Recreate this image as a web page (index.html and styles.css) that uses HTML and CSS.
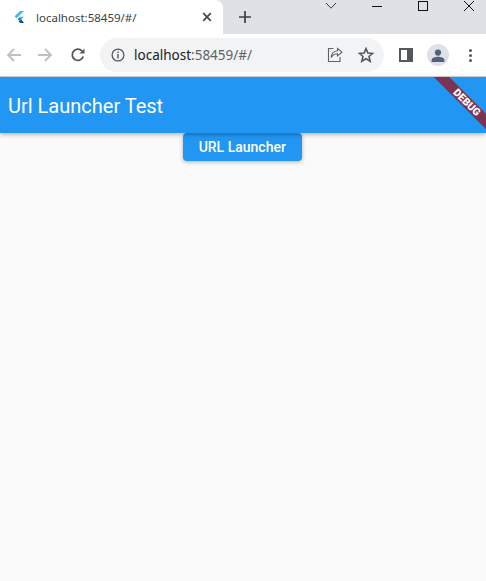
FILE: index.html
```html
<!DOCTYPE html>
<html lang="en">
<head>
    <meta charset="UTF-8">
    <title>Url Launcher Test</title>
    <link rel="stylesheet" href="styles.css">
</head>
<body>
    <div class="tabstrip">
        <div class="tab">
            <svg class="tab-logo" width="12" height="14" viewBox="0 0 12 14">
                <path d="M7.2 0.9H11L3.6 8.2 1.6 6.3z" fill="#3fb9f2"/>
                <path d="M7.2 6.8H11L7 10.9 4.8 9.2z" fill="#3fb9f2"/>
                <path d="M4.8 9.2 6.6 7.6 8.2 9.6 6.8 11z" fill="#1a7fc8"/>
                <path d="M6.8 11 8.2 9.6 11 13.1H7.4L5.4 11.3z" fill="#0a4d85"/>
            </svg>
            <span class="tab-title">localhost:58459/#/</span>
            <svg class="tab-close" width="10" height="10" viewBox="0 0 10 10">
                <path d="M1.2 1.2 8.8 8.8M8.8 1.2 1.2 8.8" stroke="#44474a" stroke-width="1.7"/>
            </svg>
        </div>
        <svg class="new-tab" width="14" height="14" viewBox="0 0 14 14">
            <path d="M7 1V13M1 7H13" stroke="#3c4043" stroke-width="1.7"/>
        </svg>
        <div class="window-controls">
            <svg width="12" height="8" viewBox="0 0 12 8"><path d="M1 1 6 6.2 11 1" fill="none" stroke="#3c4043" stroke-width="1"/></svg>
            <svg width="12" height="12" viewBox="0 0 12 12"><path d="M1 6.5H11" stroke="#111" stroke-width="1"/></svg>
            <svg width="12" height="12" viewBox="0 0 12 12"><rect x="1.5" y="1.5" width="9" height="9" fill="none" stroke="#111" stroke-width="1"/></svg>
            <svg width="12" height="12" viewBox="0 0 12 12"><path d="M1 1 11 11M11 1 1 11" stroke="#111" stroke-width="1"/></svg>
        </div>
    </div>

    <div class="toolbar">
        <svg class="nav-icon" width="16" height="16" viewBox="0 0 16 16">
            <path d="M15 8H2M8 2 2 8 8 14" fill="none" stroke="#bdc0c4" stroke-width="1.8"/>
        </svg>
        <svg class="nav-icon" width="16" height="16" viewBox="0 0 16 16">
            <path d="M1 8H14M8 2 14 8 8 14" fill="none" stroke="#bdc0c4" stroke-width="1.8"/>
        </svg>
        <svg class="nav-icon reload" width="16" height="16" viewBox="0 0 16 16">
            <path d="M13.2 9.5A5.6 5.6 0 1 1 12 4" fill="none" stroke="#54575b" stroke-width="1.8"/>
            <path d="M9.5 6.5H14.5V1.5z" fill="#54575b"/>
        </svg>
        <div class="omnibox">
            <svg width="14" height="14" viewBox="0 0 14 14">
                <circle cx="7" cy="7" r="5.9" fill="none" stroke="#54575b" stroke-width="1.3"/>
                <path d="M7 6V10.4" stroke="#54575b" stroke-width="1.4"/>
                <path d="M7 3.4V5" stroke="#54575b" stroke-width="1.4"/>
            </svg>
            <span class="url"><span class="url-host">localhost</span>:58459/#/</span>
            <svg class="share" width="16" height="16" viewBox="0 0 16 16">
                <path d="M6.5 1.5H1.5V14.5H13V10" fill="none" stroke="#5f6368" stroke-width="1.1"/>
                <path d="M10.5 1.5 15 5.2 10.5 8.9V6.7C7.8 6.7 5.6 7.7 4.3 10.4 4.4 6.7 6.9 3.9 10.5 3.7z" fill="#f1f3f4" stroke="#5f6368" stroke-width="1.1"/>
            </svg>
            <svg class="star" width="16" height="16" viewBox="0 0 16 16">
                <path d="M8 1.6 9.9 6 14.7 6.4 11 9.5 12.2 14.2 8 11.7 3.8 14.2 5 9.5 1.3 6.4 6.1 6z" fill="none" stroke="#54575b" stroke-width="1.6"/>
            </svg>
        </div>
        <svg class="side-panel" width="14" height="14" viewBox="0 0 14 14">
            <rect width="14" height="14" fill="#54575b"/>
            <rect x="2" y="2" width="6" height="10" fill="#fff"/>
        </svg>
        <div class="avatar">
            <svg width="14" height="13" viewBox="0 0 14 13">
                <circle cx="7" cy="3.6" r="3.1" fill="#54607a"/>
                <path d="M0.6 13V11C0.6 8.6 4.4 7.8 7 7.8S13.4 8.6 13.4 11V13z" fill="#54607a"/>
            </svg>
        </div>
        <div class="menu-dots"><i></i><i></i><i></i></div>
    </div>

    <div class="appbar">
        <h1>Url Launcher Test</h1>
        <div class="debug-corner">
            <div class="debug-ribbon">DEBUG</div>
        </div>
    </div>

    <main class="content">
        <button class="launch-btn" type="button">URL Launcher</button>
    </main>
</body>
</html>
```

FILE: styles.css
```css
html, body {
    height: 100%;
}
body {
    margin: 0;
    display: flex;
    flex-direction: column;
    overflow: hidden;
    background-color: #fafafa;
    font-family: Roboto, sans-serif;
}

/* browser chrome */
.tabstrip {
    height: 34px;
    flex: none;
    display: flex;
    background-color: #dee1e6;
}
.tab {
    width: 223px;
    box-sizing: border-box;
    padding: 0 11px 0 13px;
    display: flex;
    align-items: center;
    background-color: #fff;
    border-radius: 0 8px 0 0;
}
.tab-logo {
    margin-right: 11px;
}
.tab-title {
    flex: 1;
    font-family: "Noto Sans", sans-serif;
    font-size: 11.5px;
    color: #3c4043;
}
.new-tab {
    align-self: center;
    margin-left: 15px;
}
.window-controls {
    margin-left: auto;
    padding: 0 11px 0 0;
    height: 12px;
    display: flex;
    gap: 34px;
    align-items: center;
}
.toolbar {
    height: 42px;
    flex: none;
    box-sizing: border-box;
    padding: 0 0 0 6px;
    display: flex;
    align-items: center;
    background-color: #fff;
}
.nav-icon {
    margin-right: 15px;
}
.reload {
    margin-left: 2px;
    margin-right: 14px;
}
.omnibox {
    width: 284px;
    height: 34px;
    box-sizing: border-box;
    padding: 0 10px 0 11px;
    display: flex;
    align-items: center;
    background-color: #f1f3f4;
    border-radius: 17px;
}
.url {
    flex: 1;
    margin-left: 9px;
    font-family: "Noto Sans", sans-serif;
    font-size: 13.5px;
    color: #5f6368;
}
.url-host {
    color: #202124;
}
.share {
    margin-right: 15px;
}
.side-panel {
    margin-left: 15px;
}
.avatar {
    width: 22px;
    height: 22px;
    margin-left: 14px;
    display: flex;
    align-items: center;
    justify-content: center;
    background-color: #dee1e6;
    border-radius: 50%;
}
.menu-dots {
    margin-left: 20px;
    display: flex;
    flex-direction: column;
    gap: 2px;
}
.menu-dots i {
    width: 3px;
    height: 3px;
    background-color: #54575b;
    border-radius: 50%;
}

/* flutter app */
.appbar {
    height: 54px;
    flex: none;
    position: relative;
    z-index: 1;
    overflow: hidden;
    display: flex;
    align-items: center;
    padding: 2px 0 0 8px;
    border-top: 1px solid #c8cacd;
    background-color: #2196f3;
    box-shadow: 0 2px 4px rgba(0, 0, 0, 0.25);
}
.appbar h1 {
    margin: 0;
    font-size: 20px;
    font-weight: 400;
    color: #fff;
}
.debug-corner {
    position: absolute;
    top: 0;
    right: 0;
    width: 56px;
    height: 56px;
}
.debug-ribbon {
    position: absolute;
    top: 16.5px;
    right: -28px;
    width: 100px;
    height: 11px;
    box-sizing: border-box;
    padding-left: 8px;
    line-height: 11px;
    text-align: center;
    transform: rotate(45deg);
    background-color: #7c3351;
    font-size: 10.5px;
    font-weight: 900;
    color: #fff;
}
.content {
    flex: 1;
    display: flex;
    flex-direction: column;
    align-items: center;
    padding-right: 1.5px;
}
.launch-btn {
    width: 119px;
    height: 28px;
    padding: 0;
    border: none;
    border-radius: 4px;
    background-color: #2196f3;
    box-shadow: 0 1px 4px rgba(0, 0, 0, 0.3);
    font-family: Roboto, sans-serif;
    font-size: 14px;
    font-weight: 500;
    color: #fff;
    cursor: pointer;
}
```
